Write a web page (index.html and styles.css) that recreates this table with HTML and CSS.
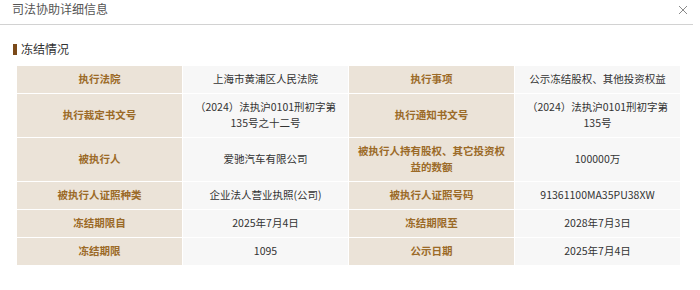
FILE: index.html
```html
<!DOCTYPE html>
<html lang="zh-CN">
<head>
<meta charset="utf-8">
<title>司法协助详细信息</title>
<link rel="stylesheet" href="styles.css">
</head>
<body>
<div class="modal">
  <div class="modal-header">
    <span class="modal-title">司法协助详细信息</span>
    <span class="close" aria-label="关闭">
      <svg width="10" height="10" viewBox="0 0 10 10"><path d="M1 1L9 9M9 1L1 9" stroke="#8a8a8a" stroke-width="1" fill="none"/></svg>
    </span>
  </div>
  <div class="section-title"><span class="bar"></span>冻结情况</div>
  <table class="info">
    <tr>
      <td class="label">执行法院</td>
      <td class="value">上海市黄浦区人民法院</td>
      <td class="label">执行事项</td>
      <td class="value">公示冻结股权、其他投资权益</td>
    </tr>
    <tr>
      <td class="label">执行裁定书文号</td>
      <td class="value">（2024）法执沪0101刑初字第135号之十二号</td>
      <td class="label">执行通知书文号</td>
      <td class="value">（2024）法执沪0101刑初字第135号</td>
    </tr>
    <tr>
      <td class="label">被执行人</td>
      <td class="value">爱驰汽车有限公司</td>
      <td class="label">被执行人持有股权、其它投资权益的数额</td>
      <td class="value">100000万</td>
    </tr>
    <tr>
      <td class="label">被执行人证照种类</td>
      <td class="value">企业法人营业执照(公司)</td>
      <td class="label">被执行人证照号码</td>
      <td class="value">91361100MA35PU38XW</td>
    </tr>
    <tr>
      <td class="label">冻结期限自</td>
      <td class="value">2025年7月4日</td>
      <td class="label">冻结期限至</td>
      <td class="value">2028年7月3日</td>
    </tr>
    <tr>
      <td class="label">冻结期限</td>
      <td class="value">1095</td>
      <td class="label">公示日期</td>
      <td class="value">2025年7月4日</td>
    </tr>
  </table>
</div>
</body>
</html>
```

FILE: styles.css
```css
html, body {
  margin: 0;
  padding: 0;
  background: #fff;
}
body {
  font-family: "Noto Sans CJK SC", "Noto Sans", sans-serif;
  color: #333;
}
.modal {
  width: 700px;
  height: 290px;
}
.modal-header {
  position: relative;
  width: 693px;
  height: 24px;
  border-bottom: 1px solid #d2d2d2;
  box-sizing: content-box;
}
.modal-title {
  display: block;
  padding-left: 12px;
  font-size: 12px;
  line-height: 18px;
  color: #555;
}
.close {
  position: absolute;
  top: 5px;
  right: 5px;
  width: 10px;
  height: 10px;
  display: block;
}
.close svg {
  display: block;
}
.section-title {
  display: flex;
  align-items: center;
  margin-top: 15px;
  padding-left: 13px;
  font-size: 12px;
  line-height: 18px;
  color: #333;
}
.bar {
  display: inline-block;
  width: 4px;
  height: 11px;
  background: #7b4a19;
  margin-right: 4px;
}
.info {
  margin: 7px 0 0 16px;
  width: 665px;
  table-layout: fixed;
  border-collapse: collapse;
  font-size: 10.5px;
  line-height: 16px;
}
.info td {
  border: 1px solid #fff;
  padding: 5px 8px 6px;
  text-align: center;
  vertical-align: middle;
  word-break: normal;
}
.info .label {
  background: #ebe3d8;
  color: #9b6a27;
  font-weight: bold;
}
.info .value {
  background: #f7f7f7;
  color: #333;
}
```
